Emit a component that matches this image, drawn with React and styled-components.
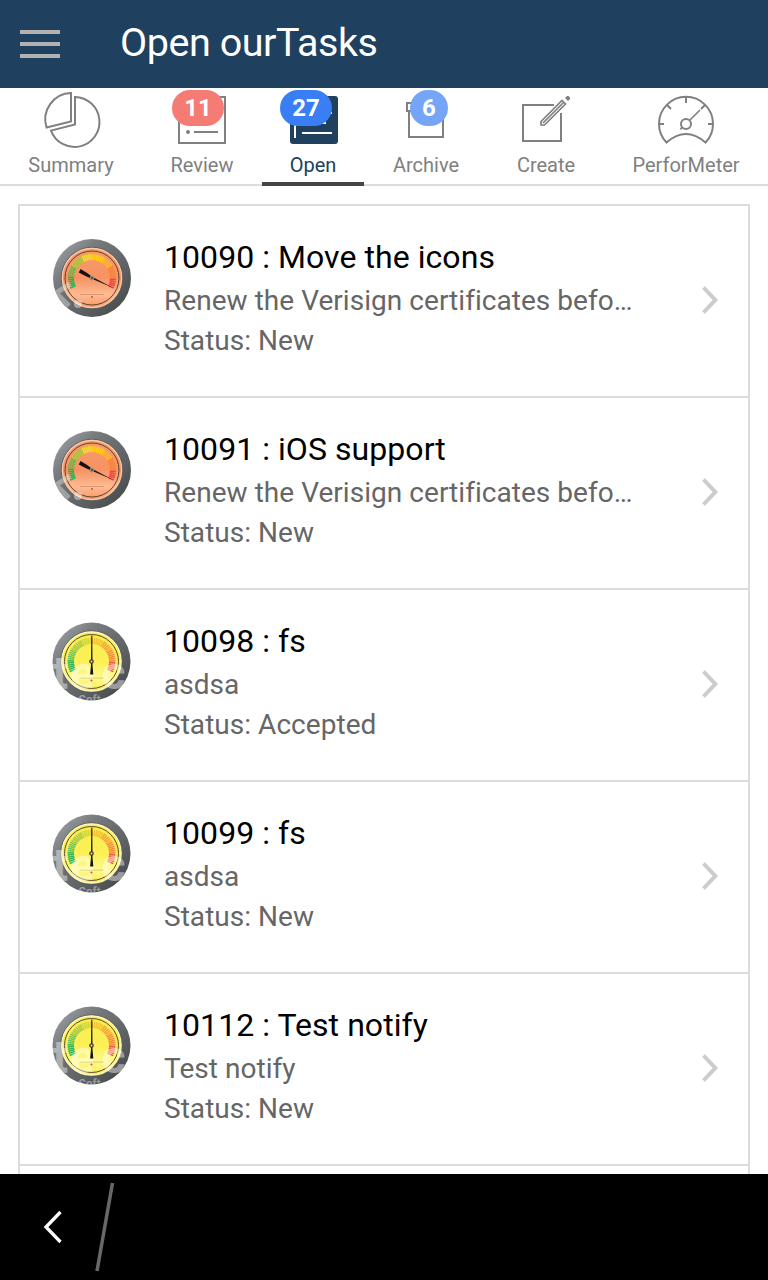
import React from "react";
import styled, { createGlobalStyle } from "styled-components";

const GlobalStyle = createGlobalStyle`
  * { box-sizing: border-box; }
  body { margin: 0; background: #fff; font-family: Roboto, "Liberation Sans", sans-serif; }
`;

const Screen = styled.div`
  width: 768px;
  height: 1280px;
  display: flex;
  flex-direction: column;
  overflow: hidden;
  background: #fff;
`;

const Header = styled.header`
  flex: none;
  height: 88px;
  display: flex;
  align-items: center;
  padding-left: 20px;
  gap: 60px;
  background: #20405f;
`;

const MenuButton = styled.button`
  width: 40px;
  height: 28px;
  padding: 0;
  border: 0;
  background: none;
  display: flex;
  flex-direction: column;
  justify-content: space-between;
`;

const MenuBar = styled.span`
  width: 40px;
  height: 4px;
  background: #b2b2b2;
`;

const Title = styled.h1`
  margin: 0;
  padding-bottom: 2px;
  font-size: 39.5px;
  font-weight: 400;
  line-height: 48px;
  letter-spacing: -0.45px;
  color: #fff;
  white-space: nowrap;
`;

const TabBar = styled.nav`
  flex: none;
  height: 98px;
  display: flex;
  border-bottom: 2px solid #dcdcdc;
`;

const Tab = styled.a`
  flex: none;
  position: relative;
  width: ${(p) => p.$width}px;
  height: 98px;
  display: flex;
  flex-direction: column;
  align-items: center;
  color: ${(p) => (p.$active ? "#20405f" : "#808080")};
  border-bottom: 4px solid ${(p) => (p.$active ? "#444" : "transparent")};
`;

const TabLabel = styled.span`
  font-size: 20px;
  line-height: 24px;
  margin-top: 3px;
  white-space: nowrap;
`;

const Badge = styled.span`
  position: absolute;
  top: 2px;
  left: ${(p) => p.$left}px;
  width: ${(p) => p.$width}px;
  height: 36px;
  border-radius: 18px;
  background: ${(p) => p.$color};
  color: #fff;
  font-size: 24px;
  font-weight: 700;
  line-height: 36px;
  text-align: center;
`;

const Content = styled.main`
  flex: 1;
  min-height: 0;
  overflow: hidden;
  padding: 18px 18px 0;
`;

const TaskList = styled.ul`
  list-style: none;
  margin: 0;
  padding: 0;
  border: solid #dcdcdc;
  border-width: 0 2px;
`;

const Task = styled.li`
  height: 192px;
  display: flex;
  border-top: 2px solid #dcdcdc;
  padding: 31px 28px 0 32px;
`;

const TaskText = styled.div`
  flex: 1;
  min-width: 0;
  padding-left: 32px;
  line-height: 40px;
  white-space: nowrap;
`;

const TaskTitle = styled.h2`
  margin: 0 0 4px;
  font-size: 32px;
  font-weight: 400;
  letter-spacing: 0.06px;
  color: #000;
`;

const TaskLine = styled.p`
  margin: 0;
  font-size: 28px;
  letter-spacing: 0.04px;
  color: #666;
`;

const GaugeIcon = styled.svg`
  flex: none;
  width: 80px;
  height: 80px;
  margin-top: 1px;
`;

const Watermark = styled.text`
  fill: #fff;
  font-family: Roboto, sans-serif;
  font-size: ${(p) => p.$size}px;
  font-weight: ${(p) => p.$weight};
`;

const Chevron = styled.svg`
  flex: none;
  width: 20px;
  height: 32px;
  margin-top: 47px;
`;

const SystemBar = styled.footer`
  flex: none;
  height: 106px;
  background: #000;
  display: flex;
`;

const iconProps = { width: 64, height: 62, fill: "none", stroke: "currentColor", strokeWidth: 2 };

const SummaryIcon = () => (
  <svg {...iconProps} viewBox="39 88 64 62">
    <path d="M71 93V121.500L46.500 127.500A26.500 26.500 0 0 1 71 93Z" />
    <path d="M75 97A25 25 0 1 1 51 130.600L75 124.500Z" />
  </svg>
);

const ReviewIcon = () => (
  <svg {...iconProps} viewBox="170 88 64 62">
    <path d="M179 97H225V143H179ZM194 132H218" />
    <circle cx="188" cy="132" r="2" fill="currentColor" stroke="none" />
  </svg>
);

const OpenIcon = () => (
  <svg {...iconProps} viewBox="281 88 64 62">
    <rect x="290" y="96" width="48" height="48" rx="3" fill="currentColor" stroke="none" />
    <path d="M295 102V138M302 133H332M302 123H326M302 113H332" stroke="#fff" />
  </svg>
);

const ArchiveIcon = () => (
  <svg {...iconProps} viewBox="394 88 64 62">
    <path d="M407 103H445V111H407ZM409 111V137H443V111" />
  </svg>
);

const CreateIcon = () => (
  <svg {...iconProps} viewBox="514 88 64 62">
    <path d="M554 105H523V141H561V113" />
    <path d="M541 125V121.500L562 100.500L565.500 104L544.500 125ZM543 123L563.500 102.500" strokeWidth="1.700" />
    <path d="M565 98L567 96H568.500L570 97.500V99L568 101Z" fill="currentColor" stroke="none" />
  </svg>
);

const MeterIcon = () => (
  <svg {...iconProps} viewBox="654 88 64 62">
    <path d="M666.500 142.500A27 27 0 1 1 705.500 142.500Q686 125.500 666.500 142.500Z" />
    <path d="M686 97V103M659 124H664M708 124H713M667 105L671 109M701 109L705 105" />
    <circle cx="686" cy="124" r="5" />
    <path d="M690 120L700 110M682 127L680.500 129.500" strokeWidth="1.600" />
  </svg>
);

const tabs = [
  { label: "Summary", width: 142, Icon: SummaryIcon },
  { label: "Review", width: 120, Icon: ReviewIcon, badge: "11", left: 30, size: 52, color: "#f47c75" },
  { label: "Open", width: 102, Icon: OpenIcon, badge: "27", left: 18, size: 52, color: "#397ef4", active: true },
  { label: "Archive", width: 124, Icon: ArchiveIcon, badge: "6", left: 46, size: 38, color: "#76a5f8" },
  { label: "Create", width: 116, Icon: CreateIcon },
  { label: "PerforMeter", width: 164, Icon: MeterIcon },
];

const tasks = [
  { title: "10090 : Move the icons", text: "Renew the Verisign certificates befo…", status: "New", high: true },
  { title: "10091 : iOS support", text: "Renew the Verisign certificates befo…", status: "New", high: true },
  { title: "10098 : fs", text: "asdsa", status: "Accepted" },
  { title: "10099 : fs", text: "asdsa", status: "New" },
  { title: "10112 : Test notify", text: "Test notify", status: "New" },
];

const hotScale = ["#27b34a", "#57c244", "#9fce3a", "#eee12d", "#ffd400", "#ffb52e", "#ff812f", "#f6403a"];
const calmScale = ["#2bb35c", "#69c35a", "#a5c94a", "#d3d53c", "#f4c232", "#f9a338", "#f78540", "#ee4f42"];

const polar = (r, deg) => {
  const a = (deg * Math.PI) / 180;
  return `${(40 + r * Math.cos(a)).toFixed(2)} ${(40 + r * Math.sin(a)).toFixed(2)}`;
};

function Gauge({ high }) {
  const id = high ? "high" : "calm";
  const scale = high ? hotScale : calmScale;
  const count = 44;
  return (
    <GaugeIcon viewBox={high ? "0 0 80 80" : "0.5 0.5 80 80"}>
      <defs>
        <linearGradient id={`${id}-rim`} x1="0" y1="0" x2="1" y2="1">
          <stop offset="0" stopColor="#a9acae" />
          <stop offset=".3" stopColor="#787b7e" />
          <stop offset=".7" stopColor="#5a5d60" />
          <stop offset="1" stopColor="#404346" />
        </linearGradient>
        <linearGradient id={`${id}-face`} x1="0" y1="0" x2="0" y2="1">
          <stop offset="0" stopColor={high ? "#f99c68" : "#f8ec50"} />
          <stop offset=".5" stopColor={high ? "#f69264" : "#fdf058"} />
          <stop offset=".78" stopColor={high ? "#ffbb92" : "#fff98c"} />
          <stop offset="1" stopColor={high ? "#f89866" : "#f8ec50"} />
        </linearGradient>
        <clipPath id={`${id}-clip`}><circle cx="40" cy="40" r="39" /></clipPath>
      </defs>
      <circle cx="40" cy="40" r="39" fill={`url(#${id}-rim)`} />
      <circle cx="40" cy="40" r="30.800" fill="none" stroke="#5a5c5e" strokeWidth=".8" />
      <circle cx="40" cy="40" r="29.700" fill={`url(#${id}-face)`} stroke={high ? "#ffc9a6" : "#fffac0"} strokeWidth="1.200" />
      <circle cx="40" cy="40" r="27" fill="none" stroke="#4c3a2b" strokeWidth=".9" />
      {Array.from({ length: count }, (_, i) => {
        const deg = 155 + (i * 230) / (count - 1);
        return (
          <path
            key={i}
            d={`M${polar(high ? 18 : 17.5, deg)}L${polar(24, deg)}`}
            stroke={scale[Math.floor((i * scale.length) / count)]}
            strokeWidth="1.500"
          />
        );
      })}
      <path d="M28 56.500H52" stroke={high ? "#b87a5c" : "#aaa34b"} strokeWidth=".5" />
      <circle cx="40" cy="59" r="1" fill="#d0532f" />
      <g clipPath={`url(#${id}-clip)`} opacity=".42">
        {high ? (
          <>
            <path d="M1 57L18 46M4 55L17 68" stroke="#e8e8e8" strokeWidth="5" fill="none" />
            <circle cx="26" cy="66" r="4" fill="#fff" />
          </>
        ) : (
          <>
            <Watermark x="1 18.500 50" y="67" $size={46} $weight={700}>tec</Watermark>
            <Watermark x="27" y="82.500" $size={12} $weight={500}>Soft</Watermark>
          </>
        )}
      </g>
      {high ? (
        <path d="M28.500 31L26.800 34.500L34 38.200L62 50.200L40 38.800L35.500 35.300Z" fill="#16120f" />
      ) : (
        <path d="M39.800 14H40.800L41 44L41.800 53H38.600L39.500 44Z" fill="#16120f" />
      )}
      <circle cx="40" cy="40" r="2.300" fill={high ? "#8e8780" : "#403c28"} />
      <circle cx="40" cy="40" r="1" fill={high ? "#444" : "#ddd"} />
    </GaugeIcon>
  );
}

export default function App() {
  return (
    <Screen>
      <GlobalStyle />
      <Header>
        <MenuButton aria-label="Menu"><MenuBar /><MenuBar /><MenuBar /></MenuButton>
        <Title>Open ourTasks</Title>
      </Header>
      <TabBar>
        {tabs.map(({ label, width, Icon, badge, left, size, color, active }) => (
          <Tab key={label} $width={width} $active={active}>
            <Icon />
            {badge && <Badge $left={left} $width={size} $color={color}>{badge}</Badge>}
            <TabLabel>{label}</TabLabel>
          </Tab>
        ))}
      </TabBar>
      <Content>
        <TaskList>
          {tasks.map((t) => (
            <Task key={t.title}>
              <Gauge high={t.high} />
              <TaskText>
                <TaskTitle>{t.title}</TaskTitle>
                <TaskLine>{t.text}</TaskLine>
                <TaskLine>Status: {t.status}</TaskLine>
              </TaskText>
              <Chevron viewBox="0.5 0 20 32" fill="none" stroke="#ccc" strokeWidth="4">
                <path d="M4 3.500L15.800 16L4 28.500" />
              </Chevron>
            </Task>
          ))}
          <Task />
        </TaskList>
      </Content>
      <SystemBar>
        <svg width="130" height="106" fill="none">
          <path d="M60.500 38L46 53L60.500 68" stroke="#fff" strokeWidth="3.300" />
          <path d="M112.500 9L97 97" stroke="#686868" strokeWidth="3.500" />
        </svg>
      </SystemBar>
    </Screen>
  );
}
